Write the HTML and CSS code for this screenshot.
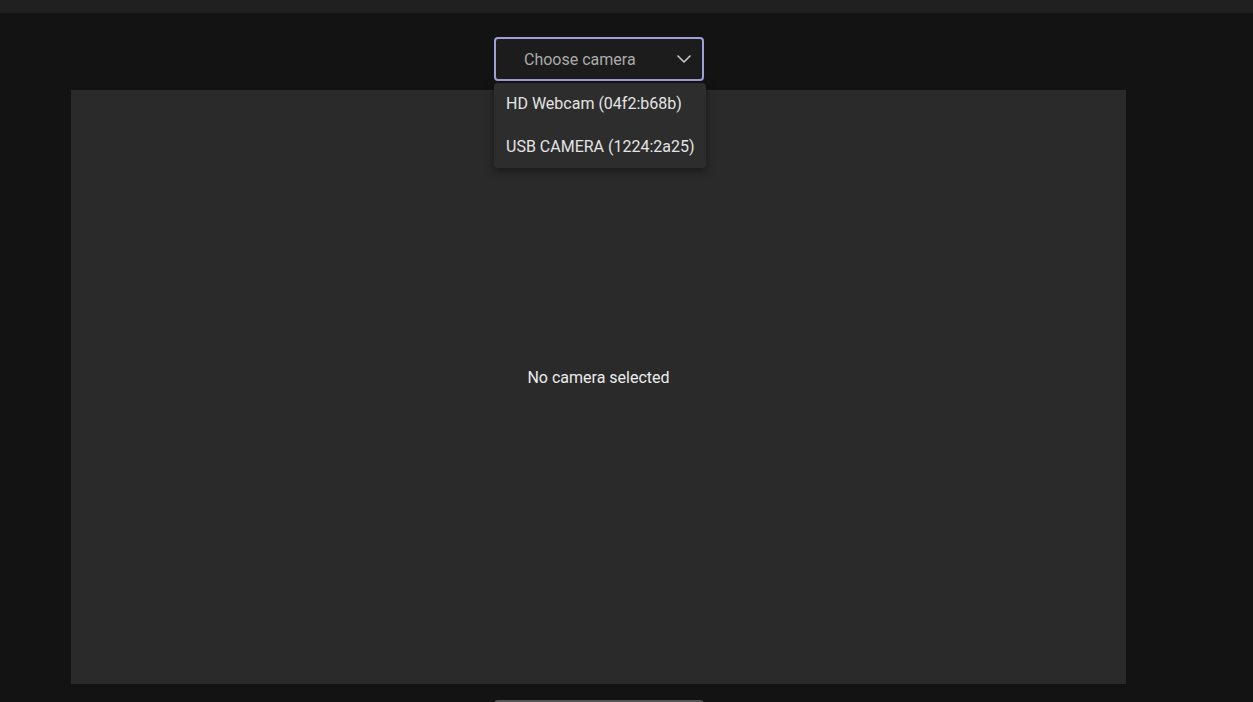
FILE: index.html
```html
<!DOCTYPE html>
<html>
<head>
<meta charset="utf-8">
<link rel="stylesheet" href="styles.css">
</head>
<body>
<div class="topbar"></div>
<main class="main">
  <div class="picker">
    <div class="select">
      <span class="select-label">Choose camera</span>
      <svg class="chevron" width="14" height="8" viewBox="0 0 14 8"><path d="M1 1 L7 7 L13 1" fill="none" stroke="#c8c8c8" stroke-width="1.6" stroke-linecap="round" stroke-linejoin="round"/></svg>
    </div>
    <div class="menu">
      <div class="menu-item">HD Webcam (04f2:b68b)</div>
      <div class="menu-item">USB CAMERA (1224:2a25)</div>
    </div>
  </div>
  <div class="video">
    <span class="empty">No camera selected</span>
  </div>
  <div class="bottom-btn"></div>
</main>
</body>
</html>
```
FILE: styles.css
```css
html, body {
  margin: 0;
  padding: 0;
  height: 100%;
  overflow: hidden;
}
body {
  background: #131313;
  font-family: Roboto, "Liberation Sans", sans-serif;
  font-size: 16px;
  color: #e6e6e6;
}
.topbar {
  height: 13px;
  background: #202020;
}
.main {
  width: 1055px;
  margin-left: 71px;
  display: flex;
  flex-direction: column;
  align-items: center;
  padding-top: 24px;
}
.picker {
  position: relative;
  width: 210px;
  margin-left: 1px;
}
.select {
  box-sizing: border-box;
  height: 44px;
  border: 2px solid #a0a0d8;
  border-radius: 4px;
  background: #1c1c1c;
  display: flex;
  align-items: center;
  padding-left: 28px;
  padding-right: 11px;
}
.select-label {
  flex: 1;
  color: #ababab;
}
.chevron {
  display: block;
}
.menu {
  position: absolute;
  left: 0;
  top: 46px;
  width: 212px;
  box-sizing: border-box;
  background: #2d2d2d;
  border-radius: 4px;
  box-shadow: 0 3px 8px rgba(0,0,0,0.45);
  z-index: 2;
  padding: 0;
}
.menu-item {
  height: 42.5px;
  line-height: 42px;
  padding-left: 12px;
  color: #e4e4e4;
  white-space: nowrap;
}
.video {
  margin-top: 9px;
  width: 1055px;
  height: 594px;
  background: #2a2a2a;
  display: flex;
  align-items: center;
  justify-content: center;
  box-sizing: border-box;
  padding-bottom: 20px;
}
.empty {
  color: #ececec;
}
.bottom-btn {
  margin-top: 16px;
  width: 210px;
  height: 44px;
  box-sizing: border-box;
  border: 2px solid #555;
  border-radius: 4px;
  margin-left: 1px;
}
```
